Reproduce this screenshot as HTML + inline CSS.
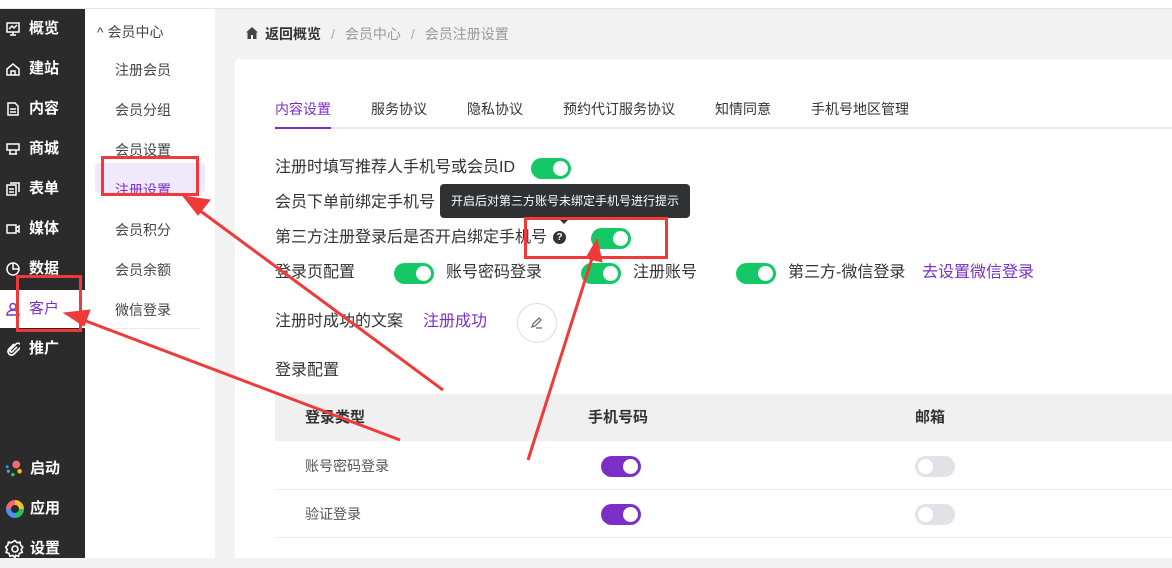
<!DOCTYPE html>
<html><head><meta charset="utf-8"><style>
*{margin:0;padding:0;box-sizing:border-box}
body{width:1172px;height:558px;overflow:hidden;position:relative;background:#f2f2f2;font-family:"Liberation Sans","Noto Sans CJK SC",sans-serif;font-size:14px;color:#333}
.abs{position:absolute}
.top{left:0;top:0;width:1172px;height:9px;background:#fff;border-bottom:1px solid #e5e5e5}
.side{left:0;top:9px;width:85px;height:549px;background:#2b2b2b}
.si{position:absolute;left:0;width:85px;height:38px;color:#fff;font-size:15px;font-weight:bold;line-height:38px;padding-left:29px}
.si .ic{position:absolute;left:6px;top:12px;width:14px;height:14px}
.sub{left:85px;top:9px;width:130px;height:549px;background:#fff}
.sm{position:absolute;left:30px;font-size:14px;color:#444}
.card{left:235px;top:59px;width:937px;height:499px;background:#fff;border-radius:4px 0 0 0}
.tab{position:absolute;top:99px;font-size:14px;color:#333}
.lbl{position:absolute;font-size:16px;color:#333;white-space:nowrap;line-height:22px}
.sw{position:absolute;width:40px;height:21px;border-radius:11px;background:#13c865}
.sw::after{content:"";position:absolute;right:3px;top:3px;width:15px;height:15px;border-radius:50%;background:#fff}
.sw.p{background:#7b2fc6}
.sw.g{background:#e0e2e8}
.sw.g::after{right:auto;left:3px}
.red{position:absolute;border:3px solid #f03a3a}
</style></head><body>
<div class="abs top"></div>
<div class="abs side">
  <div class="si" style="top:1px"><svg class="ic" viewBox="0 0 14 14" fill="none" stroke="#fff" stroke-width="1.5"><rect x="1" y="1" width="12" height="9"/><path d="M3 7l3-3 2 2 3-3M4 13h6M7 10v3"/></svg>概览</div>
  <div class="si" style="top:41px"><svg class="ic" viewBox="0 0 14 14" fill="none" stroke="#fff" stroke-width="1.5"><path d="M1 7l6-5 6 5v6H1z M5 13V9h4v4"/></svg>建站</div>
  <div class="si" style="top:81px"><svg class="ic" viewBox="0 0 14 14" fill="none" stroke="#fff" stroke-width="1.5"><path d="M2 1h7l3 3v9H2z M4 7h6M4 10h6"/></svg>内容</div>
  <div class="si" style="top:121px"><svg class="ic" viewBox="0 0 14 14" fill="none" stroke="#fff" stroke-width="1.5"><path d="M1 2h12v6H1z M4 8v4M10 8v4M3 12h8"/></svg>商城</div>
  <div class="si" style="top:161px"><svg class="ic" viewBox="0 0 14 14" fill="none" stroke="#fff" stroke-width="1.5"><rect x="1" y="3" width="9" height="10"/><path d="M4 1h9v9M3 7h5M3 10h5"/></svg>表单</div>
  <div class="si" style="top:201px"><svg class="ic" viewBox="0 0 14 14" fill="none" stroke="#fff" stroke-width="1.5"><rect x="1" y="3" width="9" height="8"/><path d="M10 6l3-2v6l-3-2"/></svg>媒体</div>
  <div class="si" style="top:241px"><svg class="ic" viewBox="0 0 14 14" fill="none" stroke="#fff" stroke-width="1.5"><circle cx="7" cy="7" r="6"/><path d="M7 1v6h6"/></svg>数据</div>
  <div class="si" style="top:281px;background:#fff;color:#7b2fc6;font-weight:normal"><svg class="ic" viewBox="0 0 14 14" fill="none" stroke="#7b2fc6" stroke-width="1.4"><circle cx="7" cy="4.5" r="3"/><path d="M1 13c0-3 3-5 6-5s6 2 6 5z"/></svg>客户</div>
  <div class="si" style="top:321px"><svg class="ic" viewBox="0 0 14 14" fill="none" stroke="#fff" stroke-width="1.6"><path d="M11 5L6 10a1.5 1.5 0 01-2-2l6-6a2.5 2.5 0 014 4l-6 6a3.5 3.5 0 01-5-5l5-5"/></svg>推广</div>
  <div class="si" style="top:441px;padding-left:30px"><svg class="ic" viewBox="0 0 16 16" style="left:5px;width:18px;height:18px;top:10px"><circle cx="10" cy="4" r="3.5" fill="#f26b6b"/><circle cx="2" cy="6" r="1.3" fill="#2e9bff"/><circle cx="3" cy="10" r="1.4" fill="#6b8cff"/><circle cx="7" cy="13" r="1.6" fill="#22c55e"/><circle cx="13" cy="10" r="2" fill="#fbbf24"/></svg>启动</div>
  <div class="si" style="top:481px;padding-left:30px"><svg class="ic" viewBox="0 0 20 20" style="left:5px;width:20px;height:20px;top:9px"><path d="M10 1a9 9 0 019 9h-5a4 4 0 00-4-4z" fill="#fbbf24"/><path d="M19 10a9 9 0 01-9 9v-5a4 4 0 004-4z" fill="#22c55e"/><path d="M10 19a9 9 0 01-9-9h5a4 4 0 004 4z" fill="#4c8dff"/><path d="M1 10a9 9 0 019-9v5a4 4 0 00-4 4z" fill="#f26b6b"/></svg>应用</div>
  <div class="si" style="top:521px;padding-left:30px"><svg class="ic" viewBox="0 0 20 20" style="left:5px;width:20px;height:20px;top:9px" fill="none" stroke="#fff" stroke-width="1.6"><path d="M10 1.5l2 2.2 3-.6.6 3 2.2 2-1.6 2.5 1.1 2.8-2.9 1-.9 2.9-2.9-.9L10 18.5l-2.2-2.1-2.9.9-.9-2.9-2.9-1 1.1-2.8L.6 8.1l2.2-2 .6-3 3 .6z"/><circle cx="10" cy="10" r="3"/></svg>设置</div>
</div>
<div class="abs sub">
  <div class="sm" style="left:12px;top:13px">^ 会员中心</div>
  <div class="sm" style="top:51px">注册会员</div>
  <div class="sm" style="top:91px">会员分组</div>
  <div class="sm" style="top:131px">会员设置</div>
  <div style="position:absolute;left:10px;top:154px;width:110px;height:30px;background:#f0e8fb;border-radius:4px"></div>
  <div class="sm" style="top:171px;color:#7b2fc6">注册设置</div>
  <div class="sm" style="top:211px">会员积分</div>
  <div class="sm" style="top:251px">会员余额</div>
  <div class="sm" style="top:291px">微信登录</div>
  <div style="position:absolute;left:15px;top:319px;width:100px;height:1px;background:#e8e8ee"></div>
</div>
<svg class="abs" style="left:246px;top:27px" width="12" height="12" viewBox="0 0 12 12"><path d="M6 0L0 5.5h1.5V12h3.5V8h2v4h3.5V5.5H12z" fill="#444"/></svg>
<div class="abs" style="left:265px;top:24px;font-size:14px;white-space:nowrap"><b style="color:#333">返回概览</b><span style="color:#aaa;margin:0 10px">/</span><span style="color:#999">会员中心</span><span style="color:#aaa;margin:0 10px">/</span><span style="color:#999">会员注册设置</span></div>
<div class="abs card"></div>
<div class="tab" style="left:275px;color:#7b2fc6">内容设置</div>
<div class="tab" style="left:371px">服务协议</div>
<div class="tab" style="left:467px">隐私协议</div>
<div class="tab" style="left:563px">预约代订服务协议</div>
<div class="tab" style="left:715px">知情同意</div>
<div class="tab" style="left:811px">手机号地区管理</div>
<div class="abs" style="left:275px;top:127px;width:897px;height:2px;background:#e6e6ee"></div>
<div class="abs" style="left:275px;top:127px;width:56px;height:2px;background:#7b2fc6"></div>

<div class="lbl" style="left:275px;top:157px">注册时填写推荐人手机号或会员ID</div><div class="sw" style="left:531px;top:158px"></div>
<div class="lbl" style="left:275px;top:192px">会员下单前绑定手机号</div>
<div class="lbl" style="left:275px;top:227px">第三方注册登录后是否开启绑定手机号</div>
<div class="abs" style="left:553px;top:231px;width:13px;height:13px;border-radius:50%;background:#333;color:#fff;font-size:10px;font-weight:bold;text-align:center;line-height:13px">?</div>
<div class="sw" style="left:591px;top:228px"></div>
<div class="abs" style="left:440px;top:184px;width:250px;height:34px;background:#303133;border-radius:4px;color:#fff;font-size:12px;line-height:34px;text-align:center">开启后对第三方账号未绑定手机号进行提示</div>
<div class="abs" style="left:558px;top:218px;width:0;height:0;border-left:6px solid transparent;border-right:6px solid transparent;border-top:6px solid #303133"></div>

<div class="lbl" style="left:275px;top:262px">登录页配置</div>
<div class="sw" style="left:394px;top:263px"></div><div class="lbl" style="left:446px;top:262px">账号密码登录</div>
<div class="sw" style="left:581px;top:263px"></div><div class="lbl" style="left:633px;top:262px">注册账号</div>
<div class="sw" style="left:736px;top:263px"></div><div class="lbl" style="left:788px;top:262px">第三方-微信登录</div>
<div class="lbl" style="left:922px;top:262px;color:#7b2fc6">去设置微信登录</div>

<div class="lbl" style="left:275px;top:311px">注册时成功的文案</div>
<div class="lbl" style="left:423px;top:311px;color:#7b2fc6">注册成功</div>
<div class="abs" style="left:517px;top:303px;width:40px;height:40px;border-radius:50%;border:1px solid #ddd"></div>
<svg class="abs" style="left:530px;top:316px" width="13" height="13" viewBox="0 0 13 13" fill="none" stroke="#666" stroke-width="1.2"><path d="M2 11l1-3 6-6 2 2-6 6zM6 12h6"/></svg>

<div class="lbl" style="left:275px;top:360px">登录配置</div>
<div class="abs" style="left:275px;top:394px;width:897px;height:47px;background:#f0f0f0"></div>
<div class="lbl" style="left:305px;top:407px;font-weight:bold;font-size:15px">登录类型</div>
<div class="lbl" style="left:588px;top:407px;font-weight:bold;font-size:15px">手机号码</div>
<div class="lbl" style="left:915px;top:407px;font-weight:bold;font-size:15px">邮箱</div>
<div class="lbl" style="left:305px;top:455px;font-size:14px;color:#555">账号密码登录</div>
<div class="sw p" style="left:601px;top:456px"></div><div class="sw g" style="left:915px;top:456px"></div>
<div class="abs" style="left:275px;top:489px;width:897px;height:1px;background:#ececf0"></div>
<div class="lbl" style="left:305px;top:503px;font-size:14px;color:#555">验证登录</div>
<div class="sw p" style="left:601px;top:504px"></div><div class="sw g" style="left:915px;top:504px"></div>
<div class="abs" style="left:275px;top:537px;width:897px;height:1px;background:#ececf0"></div>

<div class="red" style="left:16px;top:275px;width:66px;height:57px"></div>
<div class="red" style="left:101px;top:156px;width:98px;height:40px"></div>
<div class="red" style="left:524px;top:217px;width:144px;height:42px"></div>
<svg class="abs" style="left:0;top:0" width="1172" height="558">
<g stroke="#f03a3a" fill="#f03a3a">
<line x1="443" y1="390" x2="195" y2="207" stroke-width="3"/>
<polygon points="183,196 210,200 198,215"/>
<line x1="400" y1="440" x2="78" y2="318" stroke-width="3"/>
<polygon points="64,313 90,310 84,326"/>
<line x1="528" y1="460" x2="594" y2="252" stroke-width="3"/>
<polygon points="597,239 602,262 586,258"/>
</g></svg>
</body></html>
